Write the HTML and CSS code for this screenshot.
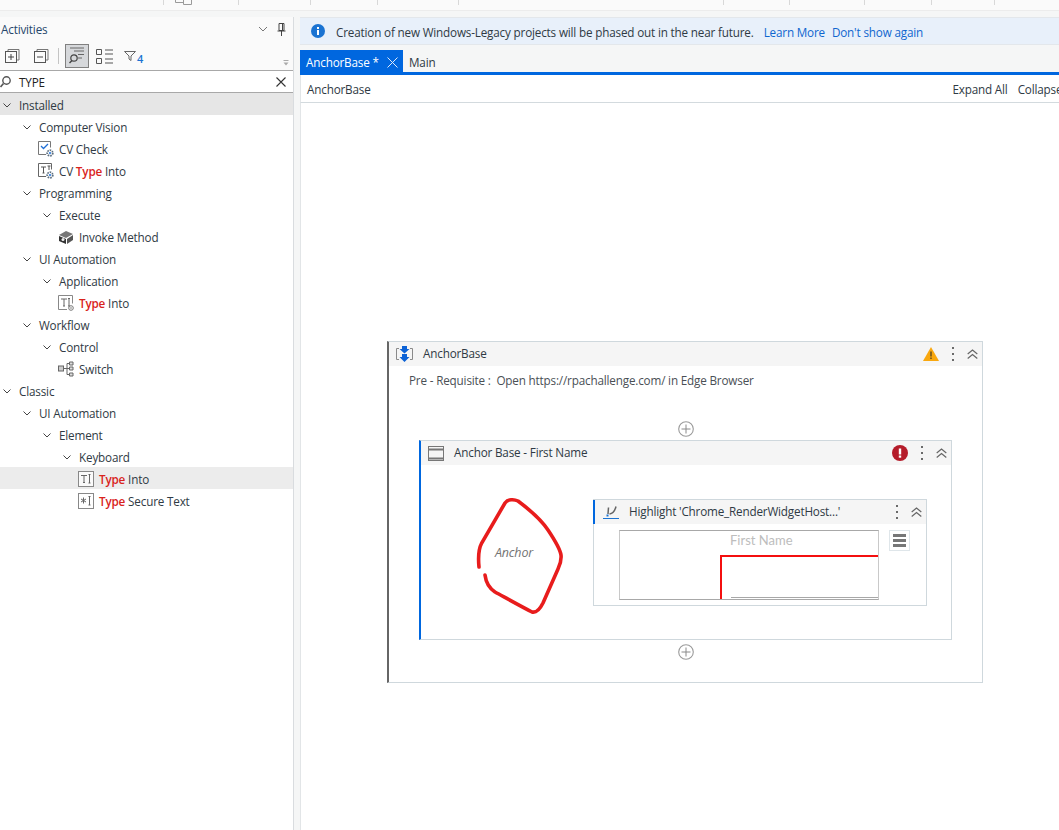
FILE: index.html
```html
<!DOCTYPE html>
<html lang="en">
<head>
<meta charset="utf-8">
<title>AnchorBase</title>
<link rel="stylesheet" href="styles.css">
</head>
<body>
<div class="topbar">
  <span class="tc w163"></span><span class="tc w75"><svg class="topicon" width="18" height="5" viewBox="0 0 18 5"><path d="M.5 0v2.5h8V0M8.5 0v4.500h8V0" fill="none" stroke="#9a9a9a"/></svg></span><span class="tc w72"></span><span class="tc w67"></span><span class="tc w81"></span><span class="tc w265"></span><span class="tc w66"></span><span class="tc w75"></span><span class="tc w67"></span><span class="tc w63"></span>
</div>
<div class="workspace">
  <aside class="sidebar">
    <div class="panel-head">
      <span class="panel-title">Activities</span>
      <span class="grip"></span>
      <svg class="chev-down" width="10" height="6" viewBox="0 0 10 6"><path d="M1 1l4 4 4-4" fill="none" stroke="#777" stroke-width="1"/></svg>
      <svg class="pin" width="9" height="13" viewBox="0 0 9 13"><path d="M2 .5h5v7H2zM.5 8h8M4.500 8v5M5.500 1v6" fill="none" stroke="#444"/></svg>
    </div>
    <div class="toolbar">
      <svg class="tool t1" width="15" height="15" viewBox="0 0 15 15"><path d="M3 2.500V.5h11v10.500h-2" fill="none" stroke="#777"/><rect x=".5" y="2.500" width="11" height="11" fill="none" stroke="#555"/><path d="M3 8h6M6 5v6" stroke="#444"/></svg>
      <svg class="tool t2" width="15" height="15" viewBox="0 0 15 15"><path d="M3 2.500V.5h11v10.500h-2" fill="none" stroke="#777"/><rect x=".5" y="2.500" width="11" height="11" fill="none" stroke="#555"/><path d="M3 8h6" stroke="#444"/></svg>
      <span class="tool-sep"></span>
      <span class="tool-active">
        <svg width="16" height="17" viewBox="0 0 16 17"><path d="M1 1h14M5 4h10M9 7.500h6M9 11h4" stroke="#666"/><circle cx="5" cy="11" r="3.200" fill="none" stroke="#444" stroke-width="1.200"/><path d="M3 13.500L.5 16" stroke="#444" stroke-width="1.400"/></svg>
      </span>
      <svg class="tool t4" width="18" height="15" viewBox="0 0 18 15"><path d="M.5.500h5v5h-5zM.5 9.500h5v5h-5z" fill="none" stroke="#555"/><path d="M9 1h8M9 5h8M9 10h8M9 14h8" stroke="#555"/></svg>
      <span class="filter">
        <svg width="12" height="11" viewBox="0 0 12 11"><path d="M.5.500h11L7 5v4.500L5 8V5z" fill="none" stroke="#666"/></svg><span class="filter-count">4</span>
      </span>
      <svg class="overflow" width="6" height="6" viewBox="0 0 6 6"><path d="M.5.500h5" stroke="#aaa"/><path d="M.5 2.500h5L3 5.500z" fill="#aaa"/></svg>
    </div>
    <div class="search">
      <svg class="search-glass" width="12" height="12" viewBox="0 0 12 12"><circle cx="6.500" cy="4.500" r="3.700" fill="none" stroke="#555" stroke-width="1.400"/><path d="M3.500 7.500L.5 11" stroke="#555" stroke-width="1.600"/></svg>
      <span class="search-text">TYPE</span>
      <svg class="search-x" width="10" height="10" viewBox="0 0 10 10"><path d="M.5.500l9 9M9.500.500l-9 9" stroke="#333" stroke-width="1.100"/></svg>
    </div>
    <div class="tree">
      <div class="row l0 sel"><svg class="cv" viewBox="0 0 8 5"><path d="M.5.500L4 4 7.500.5"/></svg><span>Installed</span></div>
      <div class="row l1"><svg class="cv" viewBox="0 0 8 5"><path d="M.5.500L4 4 7.500.5"/></svg><span>Computer Vision</span></div>
      <div class="row leaf2"><svg class="ic" viewBox="0 0 16 16"><path d="M8 13.500H.5V.5h12v6" fill="none" stroke="#777"/><path d="M3 5l2.500 2.500L10 3" fill="none" stroke="#1f6fd6" stroke-width="1.300"/><circle cx="12" cy="12" r="2.800" fill="#fff" stroke="#5d6f80" stroke-width="1.800" stroke-dasharray="1.600 .9"/><circle cx="12" cy="12" r="1.100" fill="#2a7be0"/></svg><span>CV Check</span></div>
      <div class="row leaf2"><svg class="ic" viewBox="0 0 16 16"><path d="M8 13.500H.5V.5h13v6" fill="none" stroke="#666"/><path d="M3 4h5M5.500 4v6M4.500 10h2M9.500 3h3M11 3v4" stroke="#555" fill="none"/><circle cx="12" cy="12" r="2.800" fill="#fff" stroke="#5d6f80" stroke-width="1.800" stroke-dasharray="1.600 .9"/><circle cx="12" cy="12" r="1.100" fill="#2a7be0"/></svg><span>CV <b>Type</b> Into</span></div>
      <div class="row l1"><svg class="cv" viewBox="0 0 8 5"><path d="M.5.500L4 4 7.500.5"/></svg><span>Programming</span></div>
      <div class="row l2"><svg class="cv" viewBox="0 0 8 5"><path d="M.5.500L4 4 7.500.5"/></svg><span>Execute</span></div>
      <div class="row nudge"><svg class="ic" viewBox="0 0 16 16"><path d="M1 6l7-4 7 3-7 4z" fill="#777"/><path d="M1 7l7 3v5l-7-3z" fill="#333"/><path d="M9 10l6-4v5l-6 4z" fill="#555"/><circle cx="5" cy="10.500" r="1.500" fill="#eee"/></svg><span>Invoke Method</span></div>
      <div class="row l1"><svg class="cv" viewBox="0 0 8 5"><path d="M.5.500L4 4 7.500.5"/></svg><span>UI Automation</span></div>
      <div class="row l2"><svg class="cv" viewBox="0 0 8 5"><path d="M.5.500L4 4 7.500.5"/></svg><span>Application</span></div>
      <div class="row nudge"><svg class="ic" viewBox="0 0 16 16"><path d="M9 14.500H.5V.5h14v8" fill="none" stroke="#888"/><path d="M3 4h6M6 4v7M5 11h2M11 4v7M10 3.500h2M10 11h2" stroke="#666" fill="none"/><circle cx="13" cy="13" r="2.300" fill="none" stroke="#777"/><circle cx="13" cy="13" r=".8" fill="#777"/></svg><span><b>Type</b> Into</span></div>
      <div class="row l1"><svg class="cv" viewBox="0 0 8 5"><path d="M.5.500L4 4 7.500.5"/></svg><span>Workflow</span></div>
      <div class="row l2"><svg class="cv" viewBox="0 0 8 5"><path d="M.5.500L4 4 7.500.5"/></svg><span>Control</span></div>
      <div class="row nudge"><svg class="ic" viewBox="0 0 16 16"><rect x=".5" y="5" width="5" height="5" fill="#ccc" stroke="#666"/><path d="M5.500 7.500H9M9 2.500v11M9 2.500h2M9 7.500h2M9 13.500h2" stroke="#666" fill="none"/><path d="M11.500 1h3.500v3h-3.500zM11.500 6h3.500v3h-3.500zM11.500 12h3.500v3h-3.500z" fill="#ddd" stroke="#666"/></svg><span>Switch</span></div>
      <div class="row l0"><svg class="cv" viewBox="0 0 8 5"><path d="M.5.500L4 4 7.500.5"/></svg><span>Classic</span></div>
      <div class="row l1"><svg class="cv" viewBox="0 0 8 5"><path d="M.5.500L4 4 7.500.5"/></svg><span>UI Automation</span></div>
      <div class="row l2"><svg class="cv" viewBox="0 0 8 5"><path d="M.5.500L4 4 7.500.5"/></svg><span>Element</span></div>
      <div class="row l3"><svg class="cv" viewBox="0 0 8 5"><path d="M.5.500L4 4 7.500.5"/></svg><span>Keyboard</span></div>
      <div class="row leaf4 sel2"><svg class="ic" viewBox="0 0 16 16"><rect x=".5" y=".5" width="15" height="15" fill="#fafafa" stroke="#888"/><path d="M3 4.500h6M6 4.500v7M5 11.500h2M11.500 4v8M10.500 3.500h2M10.500 12h2" stroke="#666" fill="none"/></svg><span><b>Type</b> Into</span></div>
      <div class="row leaf4"><svg class="ic" viewBox="0 0 16 16"><rect x=".5" y=".5" width="15" height="15" fill="#fff" stroke="#888"/><path d="M3 6l5 3M8 6L3 9M5.500 4.500v6M11.500 4v8M10.500 3.500h2M10.500 12h2" stroke="#666" fill="none"/></svg><span><b>Type</b> Secure Text</span></div>
    </div>
  </aside>
  <main class="main">
    <div class="banner">
      <svg class="info" width="14" height="14" viewBox="0 0 14 14"><circle cx="7" cy="7" r="7" fill="#1a73d2"/><rect x="6" y="6" width="2" height="5" fill="#fff"/><rect x="6" y="3" width="2" height="2" fill="#fff"/></svg>
      <span class="banner-text">Creation of new Windows-Legacy projects will be phased out in the near future.</span>
      <a class="link l-learn">Learn More</a>
      <a class="link">Don't show again</a>
    </div>
    <div class="tabs">
      <div class="tab active"><span class="tab-name">AnchorBase *</span><svg class="tab-x" width="11" height="11" viewBox="0 0 11 11"><path d="M.5.500l10 10M10.500.500l-10 10" stroke="#dfeafa"/></svg></div>
      <div class="tab"><span class="tab-name">Main</span></div>
    </div>
    <div class="crumbs">
      <span>AnchorBase</span>
      <span class="crumb-right"><span>Expand All</span><span>Collapse All</span></span>
    </div>
    <div class="canvas">
      <section class="card outer">
        <header class="card-head">
          <svg class="h-icon" width="17" height="16" viewBox="0 0 17 16"><path d="M3 2.500H.5v11H3M14 2.500h2.500v11H14" fill="none" stroke="#8a8a8a"/><path d="M6 0h5v3h2.500L8.500 7.500 3.500 3H6zM6 8h5v3h2.500L8.500 16l-5-5H6z" fill="#0c62d6"/></svg>
          <span class="card-title">AnchorBase</span>
          <svg class="warn" width="16" height="14" viewBox="0 0 16 14"><path d="M8 0l8 14H0z" fill="#f9a80f"/><rect x="7.500" y="4.500" width="1" height="5" fill="#222"/><rect x="7.500" y="10.500" width="1" height="1.500" fill="#222"/></svg>
          <svg class="dots" width="2" height="14" viewBox="0 0 2 14"><path d="M0 0h2v2H0zM0 6h2v2H0zM0 12h2v2H0z" fill="#6a6a6a"/></svg>
          <svg class="dchev" width="11" height="10" viewBox="0 0 11 10"><path d="M.7 5L5.500 1l4.800 4M.7 9.500l4.800-4 4.800 4" fill="none" stroke="#666" stroke-width="1.200"/></svg>
        </header>
        <p class="note">Pre - Requisite :&nbsp; Open https://rpachallenge.com/ in Edge Browser</p>
        <div class="add first"><svg width="16" height="16" viewBox="0 0 16 16"><circle cx="8" cy="8" r="7.300" fill="none" stroke="#9a9a9a" stroke-width="1.100"/><path d="M8 3.500v9M3.500 8h9" stroke="#8a8a8a"/></svg></div>
        <section class="card inner">
          <header class="card-head">
            <svg class="h-icon2" width="16" height="15" viewBox="0 0 16 15"><rect x=".5" y=".5" width="15" height="14" fill="none" stroke="#777"/><path d="M0 3.500h16M0 12.500h16" stroke="#777" stroke-width="2"/></svg>
            <span class="card-title">Anchor Base - First Name</span>
            <svg class="err" width="16" height="16" viewBox="0 0 16 16"><circle cx="8" cy="8" r="8" fill="#b51c2a"/><rect x="6.800" y="3.500" width="2.400" height="6" fill="#fff"/><rect x="6.800" y="10.500" width="2.400" height="2.200" fill="#fff"/></svg>
            <svg class="dots" width="2" height="14" viewBox="0 0 2 14"><path d="M0 0h2v2H0zM0 6h2v2H0zM0 12h2v2H0z" fill="#6a6a6a"/></svg>
            <svg class="dchev" width="11" height="10" viewBox="0 0 11 10"><path d="M.7 5L5.500 1l4.800 4M.7 9.500l4.800-4 4.800 4" fill="none" stroke="#666" stroke-width="1.200"/></svg>
          </header>
          <div class="inner-body">
            <div class="anchor">
              <svg class="scribble" width="100" height="130" viewBox="0 0 100 130"><path d="M9 77C8.300 70 8 60 11.700 53L35 13C38 9 44 9 48 11 60 20 72 31 78 40 84 49 90 58 91 65 91.500 70 90 75 88 79L73 113C70 119 66 123 62 122 52 117 36 108 25 102 19 98 16 93 15 85" fill="none" stroke="#e81c1c" stroke-width="3.600" stroke-linecap="round"/></svg>
              <span class="anchor-label">Anchor</span>
            </div>
            <section class="highlight">
              <header class="hl-head">
                <svg class="hl-icon" width="16" height="14" viewBox="0 0 16 14"><path d="M5.500 2.500L5 9M13 1.500c-1 4-3 7-6.500 7.500" fill="none" stroke="#666" stroke-width="1.500"/><path d="M3.500 9.500h2v2h-2z" fill="#1a73d2"/><path d="M0 13.500h16" stroke="#1a73d2"/></svg>
                <span class="card-title">Highlight 'Chrome_RenderWidgetHost...'</span>
                <svg class="dots" width="2" height="14" viewBox="0 0 2 14"><path d="M0 0h2v2H0zM0 6h2v2H0zM0 12h2v2H0z" fill="#6a6a6a"/></svg>
                <svg class="dchev" width="11" height="10" viewBox="0 0 11 10"><path d="M.7 5L5.500 1l4.800 4M.7 9.500l4.800-4 4.800 4" fill="none" stroke="#666" stroke-width="1.200"/></svg>
              </header>
              <div class="hl-body">
                <div class="shot">
                  <div class="shot-label">First Name</div>
                  <div class="shot-red"><div class="shot-line"></div></div>
                </div>
                <div class="menu-btn"><svg width="13" height="13" viewBox="0 0 13 13"><path d="M0 0h13v3H0zM0 5h13v3H0zM0 10h13v3H0z" fill="#777"/></svg></div>
              </div>
            </section>
          </div>
        </section>
        <div class="add last"><svg width="16" height="16" viewBox="0 0 16 16"><circle cx="8" cy="8" r="7.300" fill="none" stroke="#9a9a9a" stroke-width="1.100"/><path d="M8 3.500v9M3.500 8h9" stroke="#8a8a8a"/></svg></div>
      </section>
    </div>
  </main>
</div>
</body>
</html>
```
FILE: styles.css
```css
* { box-sizing: border-box; }
html, body { height: 100%; }
body {
  margin: 0;
  background: #f5f6f6;
  color: #2f3a44;
  font: 11.7px/16px "Open Sans", "Noto Sans", sans-serif;
  letter-spacing: -.17px;
  overflow: hidden;
  display: flex;
  flex-direction: column;
}
svg { display: block; flex: none; }

/* top strip */
.topbar {
  display: flex;
  height: 11px;
  flex: none;
  background: #fafafa;
  border-bottom: 1px solid #ececec;
  margin-bottom: 6px;
}
.tc { display: block; height: 5px; border-right: 1px solid #d8d8d8; flex: none; }
.w163 { width: 164px; } .w75 { width: 75px; padding-left: 11px; } .w72 { width: 72px; } .w67 { width: 67px; }
.w81 { width: 81px; } .w265 { width: 265px; } .w66 { width: 66px; } .w63 { width: 63px; }

.workspace { flex: 1; display: flex; min-height: 0; gap: 6px; }

/* sidebar */
.sidebar {
  width: 294px;
  flex: none;
  background: #fff;
  border-right: 1px solid #d9dcdf;
  display: flex;
  flex-direction: column;
}
.panel-head {
  display: flex;
  align-items: center;
  height: 24px;
  background: #fafafa;
  padding-left: 1px;
}
.panel-title { color: #26476b; width: 57px; }
.grip {
  width: 192px;
  height: 5px;
  background-image: radial-gradient(#b5b5b5 .6px, transparent .7px);
  background-size: 2px 2px;
}
.chev-down { margin-left: 8px; }
.pin { margin-left: 9px; }
.toolbar {
  display: flex;
  align-items: center;
  height: 30px;
  background: #fafafa;
  border-bottom: 1px solid #a8a8a8;
  padding-left: 5px;
}
.tool { margin-top: 1px; }
.t2 { margin-left: 14px; }
.tool-sep { width: 1px; height: 16px; background: #c4c4c4; margin: 0 6px 0 9px; }
.tool-active {
  width: 24px;
  height: 24px;
  background: #d6d8db;
  border: 1px solid #808080;
  display: flex;
  align-items: center;
  justify-content: center;
}
.t4 { margin-left: 7px; }
.filter { display: flex; margin: 5px 0 0 10px; align-items: flex-start; }
.filter-count { color: #1a73d2; font-size: 11px; line-height: 12px; font-weight: 600; margin: 2px 0 0 1px; }
.overflow { margin: 14px 0 0 140px; }
.search {
  display: flex;
  align-items: center;
  height: 22px;
  border-bottom: 1px solid #a8a8a8;
}
.search-text { margin-left: 7px; color: #222; }
.search-x { margin-left: auto; margin-right: 7px; }
.row {
  display: flex;
  align-items: center;
  height: 22px;
  padding-top: 2px;
  color: #2f3a44;
}
.row b { color: #d9231c; font-weight: 600; }
.cv { width: 8px; height: 5px; fill: none; stroke: #444; stroke-width: 1; margin-right: 8px; }
.ic { width: 16px; height: 16px; margin-right: 5px; }
.l0 { padding-left: 3px; }
.l1 { padding-left: 23px; }
.l2 { padding-left: 43px; }
.l3 { padding-left: 63px; }
.leaf2 { padding-left: 38px; }
.nudge { padding-left: 58px; }
.leaf4 { padding-left: 78px; }
.sel { background: #e6e6e6; }
.sel2 { background: #ececec; }

/* main */
.main {
  flex: 1;
  min-width: 0;
  display: flex;
  flex-direction: column;
  overflow: hidden;
}
.banner {
  display: flex;
  align-items: center;
  height: 28px;
  flex: none;
  background: #e8f0fa;
  border: 1px solid #e3e7eb;
  border-width: 1px 0;
  padding-left: 11px;
}
.banner-text { margin-left: 11px; white-space: nowrap; padding-top: 1px; }
.link { color: #0f66cf; margin-left: 7px; white-space: nowrap; padding-top: 1px; }
.l-learn { margin-left: 10px; }
.tabs {
  display: flex;
  height: 25px;
  flex: none;
  margin-top: 5px;
  border-bottom: 3px solid #0067df;
}
.tab { height: 22px; padding: 0 6px; color: #2f3a44; display: flex; align-items: center; white-space: nowrap; }
.tab-name { padding-top: 1px; }
.tab.active { background: #0067df; color: #fff; width: 103px; }
.tab-x { margin-left: 8px; margin-top: 2px; }
.crumbs {
  display: flex;
  justify-content: space-between;
  align-items: center;
  height: 28px;
  flex: none;
  background: #fff;
  border-bottom: 1px solid #d3dade;
  border-left: 1px solid #e2e5e7;
  padding: 0 0 0 6px;
  white-space: nowrap;
}
.crumb-right { display: flex; gap: 10px; margin-right: -19px; }
.canvas {
  flex: 1;
  background: #fff;
  border-left: 1px solid #e2e5e7;
  padding: 238px 0 0 86px;
}

/* activity cards */
.card { border: 1px solid #cfd8dd; background: #fff; }
.outer { width: 596px; height: 342px; border-left: 2px solid #666; }
.inner { width: 533px; height: 200px; margin-left: 30px; border-left: 2px solid #0067df; }
.card-head {
  display: flex;
  align-items: center;
  height: 24px;
  background: #f5f5f5;
}
.h-icon { margin-left: 7px; }
.h-icon2 { margin-left: 7px; }
.card-title { margin-left: 10px; white-space: nowrap; color: #2f3a44; padding-bottom: 2px; }
.warn { margin-left: auto; margin-right: 6px; }
.err { margin-left: auto; margin-right: 6px; }
.dots { margin: 0 7px; }
.dchev { margin-right: 4px; margin-left: 6px; }
.note { margin: 6px 0 0 20px; height: 16px; color: #4a4f55; white-space: nowrap; }
.add { display: flex; justify-content: center; }
.add.first { margin-top: 33px; margin-bottom: 3px; }
.add.last { margin-top: 4px; }

.inner-body { display: flex; align-items: flex-start; padding: 25px 0 0 49px; }
.anchor { width: 100px; height: 130px; position: relative; }
.anchor-label {
  position: absolute;
  left: 25px;
  top: 55px;
  font-size: 12.5px;
  font-style: italic;
  color: #737373;
}
.highlight {
  width: 334px;
  height: 107px;
  margin: 9px 0 0 23px;
  border: 1px solid #cfd8dd;
}
.hl-head {
  display: flex;
  align-items: center;
  height: 24px;
  background: #f5f5f5;
  border-left: 2px solid #0067df;
  margin-left: -1px;
}
.hl-icon { margin-left: 8px; }
.hl-head .dots { margin-left: auto; }
.hl-head .card-title { margin-left: 10px; }
.hl-body { display: flex; align-items: flex-start; padding: 6px 0 0 25px; }
.shot {
  width: 260px;
  height: 70px;
  border: 1px solid #c9c9c9;
  border-top-color: #a8a8a8;
  border-bottom-color: #a8a8a8;
  display: flex;
  flex-direction: column;
}
.shot-label {
  height: 24px;
  padding-left: 110px;
  line-height: 18px;
  color: #bdbdbd;
  font-family: "Lato", sans-serif;
  font-size: 13px;
  letter-spacing: 0;
}
.shot-red {
  flex: 1;
  margin-left: 100px;
  border-top: 2px solid #f40f0f;
  border-left: 2px solid #f40f0f;
  display: flex;
  flex-direction: column;
  justify-content: flex-end;
}
.shot-line { height: 1px; background: #a8a8a8; margin: 0 0 1px 9px; }
.menu-btn {
  width: 21px;
  height: 21px;
  margin-left: 10px;
  border: 1px solid #dfe6ea;
  display: flex;
  align-items: center;
  justify-content: center;
}
```
